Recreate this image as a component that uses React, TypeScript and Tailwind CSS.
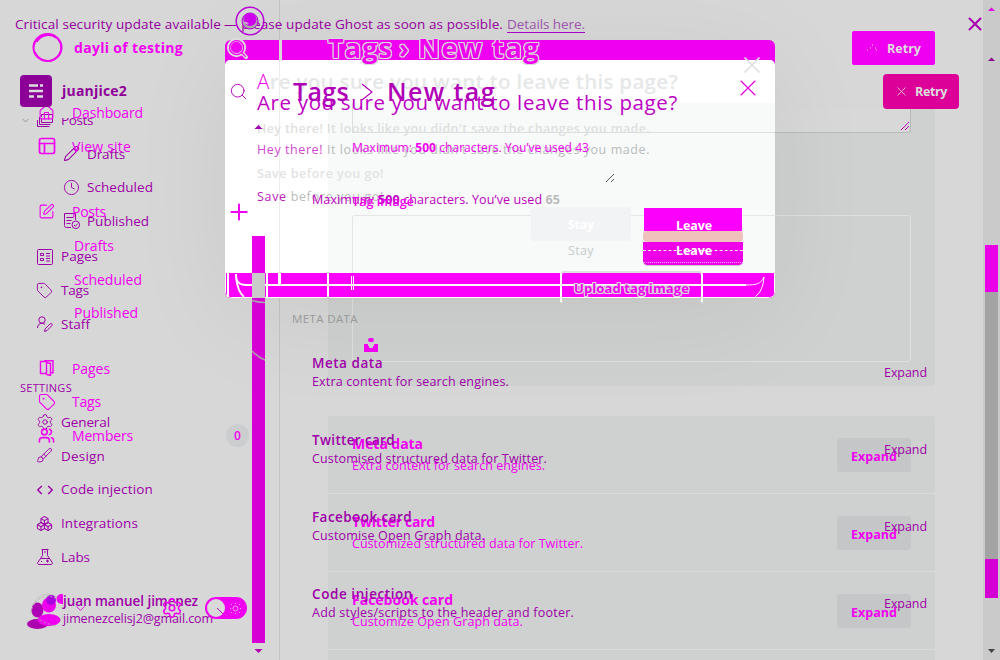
import { useLayoutEffect, useRef, type ReactNode } from 'react'
import { Boxes, Brush, ChevronDown, Clock, House, PanelsTopLeft, Pencil, Plus, Search, Settings, SquarePen, Tag, Users, X } from 'lucide-react'

// Single-line label whose tracking is adjusted so that it spans `w` pixels.
function T({ w, c = '', children }: { w: number; c?: string; children: ReactNode }) {
  const ref = useRef<HTMLSpanElement>(null)
  useLayoutEffect(() => {
    const el = ref.current
    if (!el) return
    el.style.letterSpacing = '0px'
    const n = (el.textContent || '').length
    el.style.letterSpacing = `${(w - el.getBoundingClientRect().width) / n}px`
  }, [w])
  return (
    <div className="flex shrink-0 items-start">
      <span ref={ref} className={`shrink-0 whitespace-nowrap ${c}`}>{children}</span>
    </div>
  )
}

function Layer({ c = '', children }: { c?: string; children: ReactNode }) {
  return <div className={`col-start-1 row-start-1 h-[660px] w-[1000px] min-w-0 overflow-hidden ${c}`}>{children}</div>
}

function Svg({ c = '', w = 16, h = 16, children }: { c?: string; w?: number; h?: number; children: ReactNode }) {
  return (
    <svg width={w} height={h} viewBox={`0 0 ${w} ${h}`} fill="none" stroke="currentColor" strokeWidth="1" className={`shrink-0 ${c}`}>
      {children}
    </svg>
  )
}

function Ico({ of: I, s = 17, sw = 1.5, c = '' }: { of: typeof X; s?: number; sw?: number; c?: string }) {
  return <I size={s} strokeWidth={sw} className={`shrink-0 ${c}`} />
}

const stackIcon = (
  <Svg>
    <path d="M4.5 5V2.5h11v8h-11V7M2.5 5v7.5h11M.5 8v6.5h12" />
  </Svg>
)
const publishedIcon = (
  <Svg>
    <path d="M7 14.5H2.5a2 2 0 0 1-2-2M.5 12V.5h11V7M2.5 4.5h7M2.5 7.5h5M2.5 10.5h4" />
    <circle cx="11.8" cy="11.8" r="3.8" />
    <path d="m10 12 1.3 1.3 2.5-2.8" />
  </Svg>
)
const listIcon = (
  <Svg>
    <rect x=".5" y=".5" width="15" height="15" rx="1" />
    <path d="M3.5 4.5h3v2h-3zM3.5 9.5h3v2h-3zM9 4.5h4M9 7h4M9 9.5h4M9 12h4" />
  </Svg>
)
const staffIcon = (
  <Svg>
    <circle cx="5" cy="4" r="3.2" />
    <path d="M.5 12c0-3 2-4.7 4.5-4.7 1.2 0 2.4.5 3.1 1.2M7.5 15.5l.7-2.7 5-5c1.3-1 2.7.7 1.7 1.8l-4.9 5z" />
  </Svg>
)
const codeIcon = (
  <Svg>
    <path d="M4.8 4 .8 8l4 4M11.2 4l4 4-4 4" strokeWidth="1.4" />
  </Svg>
)
const flaskIcon = (
  <Svg>
    <path d="M4.5.5h7M5.5.5v6L.8 13.5c-.5 1 .1 2 1.2 2h12c1 0 1.7-1 1.2-2L10.5 6.5v-6M3.5 9.5h9M7 3h2M4 12.5h1M9 12h3M10.5 10.5v3" />
  </Svg>
)
const pagesIcon = (
  <Svg>
    <path d="M1.5 1.5h6v12h-6zM5 .8h9v12h-3M7.5 2.5l4 1v12l-4-1" strokeWidth="1.4" />
  </Svg>
)

const upperMenu = [
  { label: 'Drafts', w: 38, icon: <Ico of={Pencil} /> },
  { label: 'Scheduled', w: 66, icon: <Ico of={Clock} sw={1.3} /> },
  { label: 'Published', w: 62, icon: publishedIcon },
]
const pageMenu = [
  { label: 'Pages', w: 37, icon: listIcon },
  { label: 'Tags', w: 28, icon: <Ico of={Tag} sw={1.3} /> },
  { label: 'Staff', w: 29, icon: staffIcon },
]
const settingsMenu = [
  { label: 'General', w: 49, icon: <Ico of={Settings} s={18} sw={1.3} /> },
  { label: 'Design', w: 44, icon: <Ico of={Brush} sw={1.3} /> },
  { label: 'Code injection', w: 92, icon: codeIcon },
  { label: 'Integrations', w: 77, icon: <Ico of={Boxes} /> },
  { label: 'Labs', w: 29, icon: flaskIcon },
]

const cardsLeft = [
  { title: 'Meta data', tw: 71, text: 'Extra content for search engines.', w: 197 },
  { title: 'Twitter card', tw: 83, text: 'Customised structured data for Twitter.', w: 235 },
  { title: 'Facebook card', tw: 100, text: 'Customise Open Graph data.', w: 173 },
  { title: 'Code injection', tw: 101, text: 'Add styles/scripts to the header and footer.', w: 262 },
]
const cardsRight = [
  { title: 'Meta data', tw: 71, text: 'Extra content for search engines.', w: 193 },
  { title: 'Twitter card', tw: 83, text: 'Customized structured data for Twitter.', w: 231 },
  { title: 'Facebook card', tw: 101, text: 'Customize Open Graph data.', w: 171 },
]

function MenuRow({ icon, label, w, c }: { icon: ReactNode; label: string; w: number; c: string }) {
  return (
    <div className={`flex h-[33.6px] shrink-0 items-center ${c}`}>
      <div className="flex w-[17px] justify-center">{icon}</div>
      <T w={w}>{label}</T>
    </div>
  )
}

function Backdrop() {
  return (
    <Layer c="flex">
      <div className="h-full w-[280px] border-r border-[#c4c4c4]" />
      <div className="flex h-full w-[703px] flex-col pl-[48px]">
        <div className="mt-[109px] h-[277px] w-[607px] shrink-0 rounded-b-[3px] bg-[#cfd1d0] px-[24px]">
          <div className="h-[24px] w-[559px] rounded-b-[3px] border border-t-0 border-[#b9bbba] bg-[#d8d8d8]">
            <Svg w={557} h={23} c="text-[#bd00bd]"><path d="m548 21 8-8M552 21l4-4" /></Svg>
          </div>
          <div className="mt-[82px] h-[147px] w-[559px] rounded-[3px] border border-[#dedfde]" />
        </div>
        <div className="mt-[30px] h-[250px] w-[607px] shrink-0 rounded-t-[3px] bg-[#cfd1d0]">
          <div className="h-[78px] border-b border-[#d9dad9]" />
          <div className="h-[78px] border-b border-[#d9dad9]" />
          <div className="h-[78px] border-b border-[#d9dad9]" />
        </div>
      </div>
      <div className="flex h-full w-[17px] flex-col items-center bg-[#cacaca] pt-[7px] text-[#e000e0]">
        <Svg w={9} h={5}><path d="M1 4h7L4.5.5z" fill="currentColor" stroke="none" /></Svg>
        <Svg w={9} h={5} c="mt-[45px] text-[#8f008f]"><path d="M1 4h7L4.5.5z" fill="currentColor" stroke="none" /></Svg>
        <div className="mt-[183px] h-[47px] w-[13px] bg-[#e900e9]" />
        <div className="h-[267px] w-[13px] bg-[#a3a3a3]" />
        <div className="h-[39px] w-[13px] bg-[#d400d4]" />
        <Svg w={9} h={5} c="mt-[51px] text-[#444]"><path d="M1 0h7L4.5 4z" fill="currentColor" stroke="none" /></Svg>
      </div>
    </Layer>
  )
}

function DialogSurface() {
  return (
    <Layer c="pl-[225px] pt-[40px]">
      <div className="flex h-[258px] w-[550px] flex-col rounded-[6px] bg-[#f000f0] shadow-[0_20px_110px_rgba(0,0,0,0.06)]">
        <div className="ml-[54px] h-[20px] w-[3px] bg-[#d7d7d7]" />
        <div className="flex h-[213px] shrink-0 rounded-t-[5px] bg-white">
          <div className="h-full w-[55px] border-r border-[#ededed]" />
          <div className="flex w-[48px] flex-col" />
          <div className="mt-[43px] h-[170px] w-[447px] bg-[#f7faf9] pl-[24px]">
            <div className="h-[30px] border-b border-l border-[#dcdede]" />
            <div className="mt-[82px] h-[58px] rounded-tl-[3px] border-l border-t border-[#e5e7e7]" />
          </div>
        </div>
        <Svg w={550} h={25} c="rounded-b-[6px] bg-[#fb00fb] text-white">
          <path d="M3 0v24M42 0v25M103 0v25" strokeWidth="2" />
          <path d="M54.5 0v12" strokeWidth="3" />
          <path d="M11 1c0 8 3 11 10 11h500M11 4c1 9 3 16 8 20" strokeWidth="2" />
          <path d="M126.5 3v14M128.5 3v14M521 12c10 0 15-1 18-8M539 4c-1 10-3 15-9 20" />
          <path d="M.5 0v19q0 5 5 5.5h539q5-.5 5-5V0" />
        </Svg>
      </div>
    </Layer>
  )
}

function SideTrack() {
  return (
    <Layer c="flex flex-col pl-[252px]">
      <Svg w={13} h={5} c="mt-[125px] text-[#a000b0]"><path d="M2.5 4h8L6.5 0z" fill="currentColor" stroke="none" /></Svg>
      <div className="mt-[106px] h-[37px] w-[13px] bg-[#e900e9]" />
      <div className="h-[25px] w-[13px] bg-[#cacaca]" />
      <Svg w={13} h={345} c="bg-[#d400d4] text-[#aaa]">
        <path d="M0 2.5c3 1 8 2 13 2M0 53c4 4 8 7 13 9" strokeWidth="1.5" />
      </Svg>
      <Svg w={13} h={5} c="mt-[6px] text-[#b000b0]"><path d="M2.5 0h8L6.5 4z" fill="currentColor" stroke="none" /></Svg>
    </Layer>
  )
}

function Banner() {
  return (
    <Layer c="pl-[15px] text-[13.5px] text-[#93009d]">
      <div className="flex h-[48px] items-center">
        <T w={206}>Critical security update available</T>
        <div className="w-[282px] pl-[3px]"><T w={279}>— please update Ghost as soon as possible.</T></div>
        <div className="w-[82px] pl-[4px]">
          <T w={78} c="text-[#9c54ac] underline decoration-[#a800c8] underline-offset-[3px]">Details here.</T>
        </div>
        <Ico of={X} s={22} sw={2.2} c="ml-[379px] text-[#a800ad]" />
      </div>
    </Layer>
  )
}

function BrandMagenta() {
  return (
    <Layer c="pl-[31px] pt-[31px] text-[#f000f0]">
      <div className="flex h-[34px] w-[904px] items-center">
        <Svg w={34} h={34}>
          <ellipse cx="16.5" cy="16.500" rx="14" ry="13.5" strokeWidth="2" />
          <path d="M3 15C5 5 19-1 27 8c7 9 1 20-8 22M4 21c4 9 16 12 22 5M6 11C10 3 20 3 25 7" strokeWidth="1.5" />
        </Svg>
        <div className="pb-[1px] pl-[9px]"><T w={109} c="text-[14px] font-bold">dayli of testing</T></div>
        <div className="ml-auto flex h-[34px] w-[83px] items-center gap-[9px] rounded-[2px] bg-[#f000f0] pl-[14px] text-[#ddd]">
          <Svg w={12} h={10}><path d="M1 7h1M6 2h1M4 5h1M9 5h1M10 7h1" /></Svg>
          <div className="pt-[2px]"><T w={34} c="text-[12.5px] font-bold">Retry</T></div>
        </div>
      </div>
    </Layer>
  )
}

function BrandPurple() {
  return (
    <Layer c="pl-[20px] pt-[74px]">
      <div className="flex h-[35px] w-[939px] items-center">
        <Svg w={32} h={32} c="mb-[2px] rounded-[4px] bg-[#8d0098] text-[#ddd]">
          <path d="M9 10.500h9M20 10.500h3M9 16h14M9 21.500h5M17 21.500h6" strokeWidth="2.6" />
        </Svg>
        <div className="pb-[2px] pl-[10px]"><T w={65} c="text-[14px] font-bold text-[#8f0099]">juanjice2</T></div>
        <div className="ml-auto flex h-[35px] w-[76px] items-center gap-[6px] rounded-[4px] bg-[#dc0098] pl-[11px] text-[#ddd]">
          <Ico of={X} s={15} sw={1.3} />
          <div className="pt-[2px]"><T w={32} c="text-[12.5px] font-bold">Retry</T></div>
        </div>
      </div>
    </Layer>
  )
}

function SidebarPurple() {
  return (
    <Layer c="text-[13.5px] text-[#9d00a7]">
      <div className="flex w-[250px] flex-col pt-[103px]">
        <div className="flex h-[34px] items-center pl-[20px]">
          <Ico of={ChevronDown} s={11} c="text-[#777]" />
          <div className="pl-[6px]">{stackIcon}</div>
          <div className="pl-[8px]"><T w={32} c="[clip-path:inset(8px_0_0_0)]">Posts</T></div>
        </div>
        {upperMenu.map((m) => <MenuRow key={m.label} {...m} c="gap-[7px] pl-[63px]" />)}
        <div className="h-[2px]" />
        {pageMenu.map((m) => <MenuRow key={m.label} {...m} c="gap-[8px] pl-[36px]" />)}
        <div className="mt-[31px] flex h-[34px] items-center pl-[20px]"><T w={52} c="text-[11px] font-medium">SETTINGS</T></div>
        {settingsMenu.map((m) => <MenuRow key={m.label} {...m} c="gap-[8px] pl-[36px]" />)}
        <div className="mt-[17px] flex pl-[27px]">
          <Svg w={36} h={40} c="text-[#aaa]">
            <circle cx="21" cy="19" r="16" stroke="#c0c4c0" />
            <g stroke="none">
              <ellipse cx="10.5" cy="19" rx="6" ry="7.5" fill="#b000b5" />
              <ellipse cx="10.5" cy="33" rx="10.5" ry="5" fill="#ad00af" />
              <ellipse cx="22" cy="14" rx="7" ry="7.5" fill="#ef00ef" />
              <ellipse cx="22" cy="29" rx="11.5" ry="6" fill="#ef00ef" />
              <circle cx="24" cy="9" r="5" fill="#a900e0" />
              <circle cx="34.5" cy="8" r="5" fill="#ef00ef" />
            </g>
            <path d="M4 22C6 8 20 1 29 8M10 27c7 5 14 7 19 8" strokeDasharray="2 2" />
          </Svg>
          <div className="flex flex-col">
            <T w={135} c="h-[19px] text-[13.5px] font-semibold leading-[20px]">juan manuel jimenez</T>
            <T w={150} c="text-[12.5px] leading-[18px]">jimenezcelisj2@gmail.com</T>
          </div>
        </div>
      </div>
    </Layer>
  )
}

function SidebarMagenta() {
  const c = 'gap-[17px] pl-[38px]'
  const sub = 'gap-[19px] pl-[38px]'
  return (
    <Layer c="text-[14px] text-[#f000f0]">
      <div className="flex w-[250px] flex-col pt-[96px]">
        <MenuRow label="Dashboard" w={71} icon={<Ico of={House} />} c={c} />
        <MenuRow label="View site" w={59} icon={<Ico of={PanelsTopLeft} s={20} sw={2} />} c={c} />
        <div className="h-[32px]" />
        <MenuRow label="Posts" w={34} icon={<Ico of={SquarePen} />} c={c} />
        <MenuRow label="Drafts" w={40} icon={null} c={sub} />
        <MenuRow label="Scheduled" w={68} icon={null} c={sub} />
        <MenuRow label="Published" w={64} icon={null} c={sub} />
        <div className="h-[22px]" />
        <MenuRow label="Pages" w={38} icon={pagesIcon} c={c} />
        <MenuRow label="Tags" w={29} icon={<Ico of={Tag} s={18} />} c={c} />
        <div className="flex items-center justify-between">
          <MenuRow label="Members" w={61} icon={<Ico of={Users} sw={2.2} />} c={c} />
          <div className="mr-[1px] flex size-[23px] items-center justify-center rounded-full bg-[#cbcdce] text-[12px] font-semibold">0</div>
        </div>
        <div className="mt-[143px] flex h-[26px] items-center">
          <Ico of={ChevronDown} s={15} c="ml-[73px]" />
          <Ico of={Settings} s={22} sw={1.7} c="ml-[73px]" />
          <div className="-mr-[5px] ml-[22px] flex h-[22px] w-[42px] shrink-0 items-center gap-[5px] rounded-full bg-[#f000f0] pl-[2px]">
            <Svg w={18} h={18} c="rounded-full bg-[#d9d9d9] text-[#b000b0]"><path d="m10 9 6 6" /></Svg>
            <Svg w={11} h={11} c="text-[#eaa0ea]"><circle cx="5.5" cy="5.5" r="2.5" /><path d="M5.5 0v1M5.5 10v1M0 5.5h1M10 5.5h1M1 1l1 1M9 9l1 1M1 10l1-1M9 2l1-1" /></Svg>
          </div>
        </div>
      </div>
    </Layer>
  )
}

function CardsPurple() {
  return (
    <Layer c="flex flex-col pt-[308px] text-[#9d00a7]">
      <div className="pl-[292px]"><T w={66} c="text-[11.5px] leading-[22px] text-[#999]">META DATA</T></div>
      <div className="flex flex-col pl-[312px] pt-[23px]">
        {cardsLeft.map((m) => (
          <div key={m.title} className="flex h-[77.1px] w-[615px] shrink-0 justify-between">
            <div className="flex flex-col">
              <T w={m.tw} c="h-[20px] text-[13.5px] font-semibold leading-[20px]">{m.title}</T>
              <T w={m.w} c="text-[12.5px] leading-[18px]">{m.text}</T>
            </div>
            <T w={43} c="pt-[10px] text-[12.5px] leading-[20px]">Expand</T>
          </div>
        ))}
      </div>
    </Layer>
  )
}

function CardsMagenta() {
  return (
    <Layer c="flex flex-col pl-[352px] pt-[338px] text-[#f000f0]">
      <Svg w={14} h={14} c="ml-[12px]"><path d="M5 0h4l1 2-1 2H5L4 2zM0 6h4v2h1v2h4V8h1V6h4v8H0z" fill="currentColor" stroke="none" /></Svg>
      <div className="flex flex-col pt-[81px]">
        {cardsRight.map((m) => (
          <div key={m.title} className="flex h-[78px] w-[559px] shrink-0 justify-between">
            <div className="flex flex-col">
              <T w={m.tw} c="h-[23px] text-[14px] font-bold leading-[22px]">{m.title}</T>
              <T w={m.w} c="text-[12.5px] leading-[20px]">{m.text}</T>
            </div>
            <div className="mt-[5px] flex h-[34px] w-[74px] items-center justify-center rounded-[3px] bg-[#c2c3c5]/80 pt-[4px]">
              <T w={46} c="text-[12.5px] font-bold">Expand</T>
            </div>
          </div>
        ))}
      </div>
    </Layer>
  )
}

const outline =
  'text-[#f000f0] [text-shadow:1px_0_#d9d9d9,-1px_0_#d9d9d9,0_1px_#d9d9d9,0_-1px_#d9d9d9,1px_1px_#d9d9d9,-1px_-1px_#d9d9d9,1px_-1px_#d9d9d9,-1px_1px_#d9d9d9]'

function TitleUpper() {
  return (
    <Layer c="pl-[226px] pt-[30px]">
      <div className="flex h-[36px] items-center">
        <Ico of={Search} s={23} sw={4} c="text-[#ddd]" />
        <Ico of={Search} s={21} sw={1.5} c="-ml-[22px] text-[#f000f0]" />
        <div className={`ml-[80px] flex items-center text-[27px] font-bold ${outline}`}>
          <T w={65}>Tags</T>
          <div className="w-[25px] pl-[6px]"><T w={13}>›</T></div>
          <T w={122}>New tag</T>
        </div>
      </div>
    </Layer>
  )
}

function TitleLower() {
  return (
    <Layer c="pl-[229px] pt-[73px] text-[#b000b8]">
      <div className="flex h-[36px] w-[530px] items-center">
        <Ico of={Search} s={19} sw={1.2} />
        <div className="pl-[45px] pt-[2px]"><T w={56} c="text-[25px] font-semibold">Tags</T></div>
        <Svg w={20} h={20} c="ml-[8px]"><path d="m5 3 10 8-10 8" strokeWidth="1.1" /></Svg>
        <div className="pl-[10px] pt-[2px]"><T w={109} c="text-[25px] font-semibold">New tag</T></div>
      </div>
      <div className="pl-[2px] pt-[92px]"><Ico of={Plus} s={26} sw={1.9} c="-ml-[5px] -mt-[2px] text-[#f000f0]" /></div>
    </Layer>
  )
}

const question = 'Are you sure you want to leave this page?'
const warning = "Hey there! It looks like you didn't save the changes you made."

function DialogUpper() {
  return (
    <Layer c="flex flex-col pl-[257px] pt-[64px] text-[#dfdfdf]">
      <div className="flex h-[34px] shrink-0 items-center">
        <T w={421} c="text-[20.5px] font-semibold text-[#e6e7e7]"><span className="font-light text-[#f000f0]">A</span>{question.slice(1)}</T>
        <Ico of={X} s={28} sw={1.5} c="-mt-[32px] ml-[60px]" />
      </div>
      <div className="mt-[20px] flex h-[22px] items-center"><T w={393} c="text-[12.5px] font-semibold">{warning}</T></div>
      <div className="mt-[23px] flex h-[22px] items-center"><T w={127} c="text-[12.5px] font-semibold text-[#e3e3e3]">Save before you go!</T></div>
      <div className="ml-[274px] mt-[22px] flex w-[212px] justify-between">
        <div className="flex h-[34px] w-[100px] items-center justify-center rounded-[3px] bg-[#f2f3f5] pt-[2px]"><T w={26} c="text-[12.5px] font-bold text-white">Stay</T></div>
        <div className="mt-[1px] flex w-[100px] flex-col items-center">
          <div className="h-[23px] w-[98px] bg-[#fb00fb]" />
          <div className="h-[11px] w-full rounded-[4px] bg-[#f0c0bc]" />
          <div className="h-[24px] w-full rounded-b-[5px] border-b border-[#ccc] bg-[#ee00e8]">
            <div className="h-[9px] border-b border-dashed border-[#eee]" />
            <div className="h-[12px] border-b border-dotted border-[#f8a0f8]" />
          </div>
        </div>
      </div>
    </Layer>
  )
}

function DialogLower() {
  return (
    <Layer c="flex flex-col pl-[257px] pt-[85px]">
      <div className="flex h-[34px] shrink-0 items-center">
        <T w={421} c="text-[20.5px] text-[#bd00c4]">{question}</T>
        <Ico of={X} s={28} sw={1} c="-mt-[28px] ml-[56px] text-[#df00df]" />
      </div>
      <div className="mt-[20px] flex h-[22px] items-center"><T w={393} c="text-[12.5px] text-[#bbb]"><span className="text-[#cf48cf]">Hey there!</span>{warning.slice(10)}</T></div>
      <div className="mt-[25px] flex h-[22px] items-center"><T w={127} c="text-[12.5px] text-[#bbb]"><span className="text-[#bd20bd]">Save</span> before you go!</T></div>
      <div className="ml-[311px] mt-[7px] flex flex-col gap-[3px]">
        <div className="flex h-[22px] items-center pl-[108px]"><T w={36} c="text-[12.5px] font-bold text-white">Leave</T></div>
        <div className="flex h-[22px] items-center gap-[82px]"><T w={26} c="text-[12.5px] text-[#c9cbcb]">Stay</T><T w={36} c="text-[12.5px] font-bold text-white">Leave</T></div>
      </div>
    </Layer>
  )
}

function CounterMagenta() {
  return (
    <Layer c="flex flex-col pl-[352px] pt-[137px] text-[#ef00ef]">
      <div className="flex h-[22px] items-center"><T w={237} c="text-[12px]">Maximum: <b>500</b> characters. You’ve used 43</T></div>
      <div className="mt-[32px] flex h-[22px] items-center"><T w={62} c="text-[12.5px] font-semibold">Tag image</T></div>
      <div className="ml-[208px] mt-[58px] flex h-[33px] w-[143px] items-center justify-center rounded-[4px] border-2 border-t-[#ddd] border-x-white border-b-[#c7c7c7] pt-[2px]">
        <T w={115} c={`text-[13px] font-bold ${outline}`}>Upload tag image</T>
      </div>
    </Layer>
  )
}

function CounterPurple() {
  return (
    <Layer c="flex flex-col pl-[312px] pt-[172px] text-[#bd00bd]">
      <Svg w={303} h={12} c="text-[#555]"><path d="m294 10 8-8M299 10l3-3" /></Svg>
      <div className="mt-[5px] flex h-[22px] items-center"><T w={248} c="text-[12.5px]">Maximum: <b>500</b> characters. You’ve used <b className="text-[#bbb]">65</b></T></div>
    </Layer>
  )
}

function Radar() {
  return (
    <Layer c="pl-[235px] pt-[6px]">
      <Svg w={30} h={30} c="text-[#b700d7]">
        <circle cx="15" cy="15" r="13.8" strokeWidth="1.5" />
        <circle cx="15" cy="15" r="8" fill="#aaa" strokeWidth="1" />
        <circle cx="15" cy="13.5" r="6.5" fill="#ce00ee" stroke="none" />
        <path d="M9 17c2-1 3 0 4 1" stroke="#c9a9d0" strokeWidth="2" />
      </Svg>
    </Layer>
  )
}

export default function App() {
  return (
    <main className="grid h-[660px] w-[1000px] overflow-hidden bg-[#d7d7d7] [font-family:'Open_Sans','Noto_Sans',sans-serif]">
      <Backdrop />
      <DialogSurface />
      <Banner />
      <SidebarPurple />
      <SidebarMagenta />
      <BrandMagenta />
      <BrandPurple />
      <TitleUpper />
      <DialogUpper />
      <DialogLower />
      <TitleLower />
      <CounterPurple />
      <CounterMagenta />
      <CardsMagenta />
      <CardsPurple />
      <SideTrack />
      <Radar />
    </main>
  )
}
